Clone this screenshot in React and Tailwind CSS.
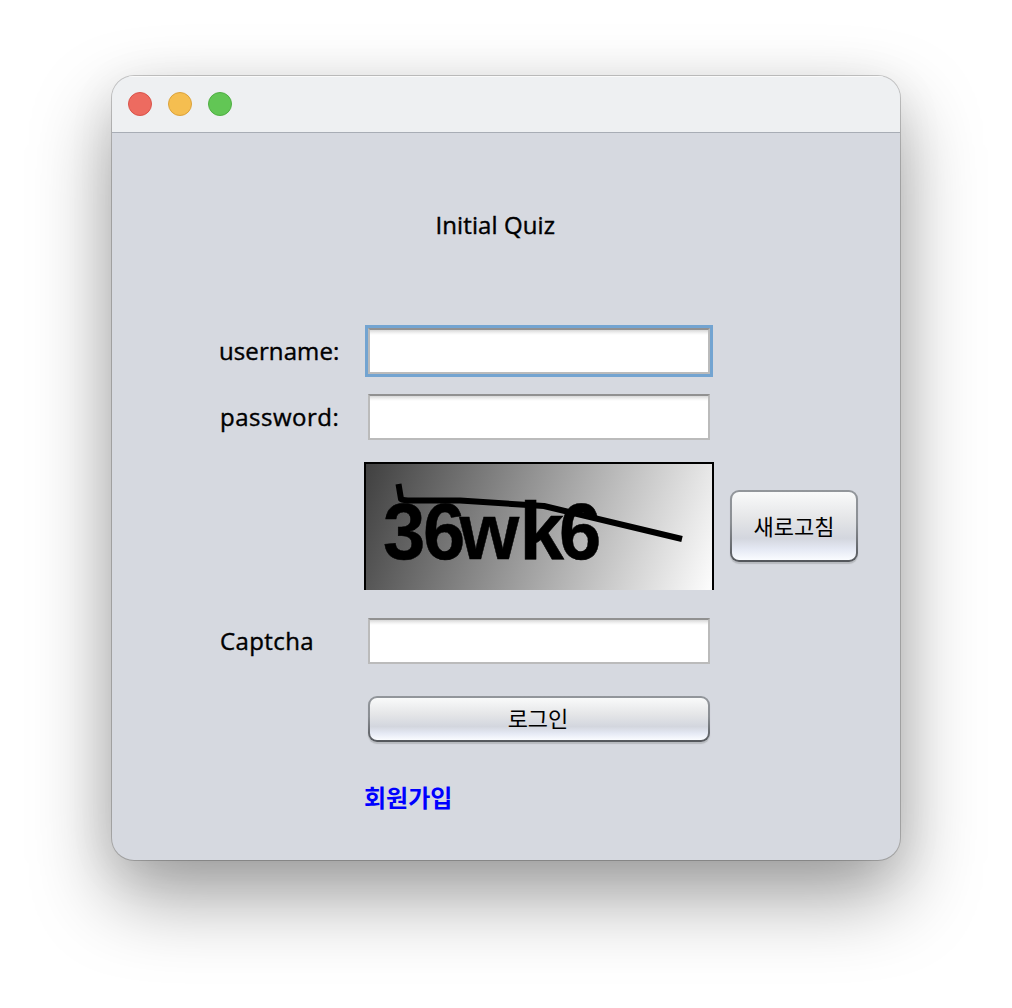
const sans = 'font-["Open_Sans","Noto_Sans_CJK_KR",sans-serif] [-webkit-text-stroke:0.4px_black]';
const korean = 'font-["Noto_Sans_CJK_KR",sans-serif]';

function Dot({ className }) {
  return <span className={`size-6 rounded-full border ${className}`} />;
}

function Label({ children, className }) {
  return (
    <span className="w-[252px] shrink-0 pl-[107px]">
      <span className={`${sans} block whitespace-nowrap text-[24px] font-medium leading-[34px] text-black ${className}`}>
        {children}
      </span>
    </span>
  );
}

function Field({ focused, type = "text", label }) {
  return (
    <div className={focused ? "border-[3px] border-[#73a4d1]" : "mx-1"}>
      <input
        type={type}
        aria-label={label}
        className="block h-[46px] w-[342px] border-2 border-[#bbbbbb] border-t-[#919191] bg-[linear-gradient(#d8d8d8_0px,#f3f3f3_3px,#ffffff_5px)] px-2 text-xl outline-none"
      />
    </div>
  );
}

function MetalButton({ children, className, textClassName }) {
  return (
    <button
      className={`${korean} rounded-[9px] bg-[linear-gradient(#92969b,#8b8f94_45%,#53565b)] p-[2px] text-[22px] leading-none text-black shadow-[0_2px_1px_#b7babf] ${className}`}
    >
      <span className={`flex size-full items-center justify-center rounded-[7px] bg-[linear-gradient(#f9fafa,#e5e6e8_38%,#d3d6de_68%,#e5e9f4_84%,#fafcff)] ${textClassName}`}>
        {children}
      </span>
    </button>
  );
}

function Captcha() {
  return (
    <svg viewBox="0 0 350 128" className="h-32 w-[350px] shrink-0">
      <defs>
        <linearGradient id="shade" gradientUnits="userSpaceOnUse" x1="2" y1="2" x2="348" y2="128">
          <stop offset="0" stopColor="#404040" />
          <stop offset="1" stopColor="#fdfdfd" />
        </linearGradient>
      </defs>
      <rect width="350" height="128" fill="#000" />
      <rect x="2" y="2" width="346" height="126" fill="url(#shade)" />
      <g fontFamily="Liberation Sans, sans-serif" fontWeight="700" fontSize="80" stroke="#000" strokeWidth="0.5">
        <text transform="translate(19 97) scale(.95 1)">3</text>
        <text transform="translate(59 97) scale(.95 1)">6</text>
        <text transform="translate(95.5 97) scale(.96 1)">w</text>
        <text transform="translate(155.5 97) scale(1 1.03)">k</text>
        <text transform="translate(195 97) scale(.95 1)">6</text>
      </g>
      <path d="M34.5 22 L37 37 Q40 39 52 38.5 L96 38.5 L180 44 L318 77" fill="none" stroke="#000" strokeWidth="6" strokeLinejoin="round" />
    </svg>
  );
}

export default function App() {
  return (
    <main className="h-[1008px] w-[1012px] overflow-hidden bg-white px-28 pt-[76px]">
      <section className="flex h-[784px] w-[788px] flex-col overflow-hidden rounded-[22px] bg-[#d6d9e0] shadow-[0_0_0_1px_rgba(0,0,0,0.2),0_36px_80px_rgba(0,0,0,0.38),0_10px_50px_rgba(0,0,0,0.07)]">
        <header className="flex h-[57px] shrink-0 items-center gap-4 border-b border-[#a8adb5] bg-[#eef0f2] px-4 shadow-[inset_0_1px_0_#fafafa]">
          <Dot className="border-[#d9534a] bg-[#ed6b60]" />
          <Dot className="border-[#dba23b] bg-[#f5be50]" />
          <Dot className="border-[#4fae43] bg-[#62c655]" />
        </header>

        <h1 className={`${sans} mt-[75px] h-[34px] pl-[323.5px] text-[24px] font-medium leading-[34px] tracking-[0.1px] text-black`}>
          Initial Quiz
        </h1>

        <div className="mt-[83px] flex h-[52px] items-center">
          <Label className="tracking-[0.1px]">username:</Label>
          <div className="pl-px"><Field focused label="username" /></div>
        </div>
        <div className="mt-[17px] flex h-[46px] items-center">
          <Label className="pl-px tracking-[0.5px]">password:</Label>
          <Field type="password" label="password" />
        </div>
        <div className="mt-[22px] flex h-32 items-center pl-[252px]">
          <Captcha />
          <MetalButton className="ml-4 h-[72px] w-32" textClassName="pb-0.5">새로고침</MetalButton>
        </div>
        <div className="mt-7 flex h-[46px] items-center">
          <Label className="pl-px tracking-[0.4px]">Captcha</Label>
          <Field label="captcha" />
        </div>
        <div className="mt-8 pl-[256px]">
          <MetalButton className="block h-[46px] w-[342px]" textClassName="pr-0.5 pb-1">로그인</MetalButton>
        </div>
        <a className={`${korean} ml-[252px] mt-[39px] text-[24px] font-bold leading-8 text-[#0000ff]`}>
          회원가입
        </a>
      </section>
    </main>
  );
}
